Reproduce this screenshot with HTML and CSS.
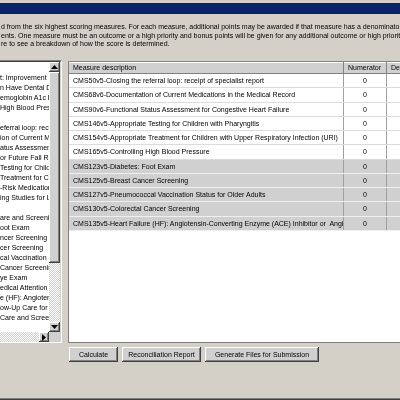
FILE: index.html
```html
<!DOCTYPE html>
<html lang="en">
<head>
    <meta charset="UTF-8">
    <meta name="viewport" content="width=device-width, initial-scale=1.0">
    <title>Quality Measures</title>
    <link rel="stylesheet" href="styles.css">
</head>
<body>
<div class="window">

    <div class="titlebar"></div>

    <p class="intro">d from the six highest scoring measures. For each measure, additional points may be awarded if that measure has a denominator<br>
    ents. One measure must be an outcome or a high priority and bonus points will be given for any additional outcome or high priority<br>
    re to see a breakdown of how the score is determined.</p>

    <div class="main">

        <!-- lista de medidas disponibles -->
        <div class="list-box">
            <div class="list-top">
                <ul class="measure-list">
                    <li></li>
                    <li>t: Improvement in Blood Pressure</li>
                    <li>n Have Dental Decay or Cavities</li>
                    <li>emoglobin A1c Poor Control</li>
                    <li>High Blood Pressure</li>
                    <li></li>
                    <li>eferral loop: receipt of specialist report</li>
                    <li>ion of Current Medications</li>
                    <li>atus Assessment for Congestive</li>
                    <li>or Future Fall Risk</li>
                    <li>Testing for Children with Pharyngitis</li>
                    <li>Treatment for Children with URI</li>
                    <li>-Risk Medications in the Elderly</li>
                    <li>ing Studies for Low Back Pain</li>
                    <li></li>
                    <li>are and Screening for Tobacco</li>
                    <li>oot Exam</li>
                    <li>ncer Screening</li>
                    <li>cer Screening</li>
                    <li>cal Vaccination Status</li>
                    <li>Cancer Screening</li>
                    <li>ye Exam</li>
                    <li>edical Attention for Nephropathy</li>
                    <li>e (HF): Angiotensin-Converting</li>
                    <li>ow-Up Care for Children</li>
                    <li>Care and Screening</li>
                </ul>
                <div class="vscroll">
                    <div class="sbtn"><svg width="7" height="4" viewBox="0 0 7 4"><polygon points="3.5,0 7,4 0,4" fill="#000"/></svg></div>
                    <div class="thumb"></div>
                    <div class="track"></div>
                    <div class="sbtn"><svg width="7" height="4" viewBox="0 0 7 4"><polygon points="0,0 7,0 3.5,4" fill="#000"/></svg></div>
                </div>
            </div>
            <div class="hscroll">
                <div class="track"></div>
                <div class="sbtn"><svg width="4" height="7" viewBox="0 0 4 7"><polygon points="0,0 4,3.5 0,7" fill="#000"/></svg></div>
                <div class="corner"></div>
            </div>
        </div>

        <!-- medidas seleccionadas -->
        <div class="right-pane">
            <div class="grid">
                <div class="row head">
                    <div class="cell">Measure description</div>
                    <div class="cell">Numerator</div>
                    <div class="cell">Denominator</div>
                </div>
                <div class="row">
                    <div class="cell">CMS50v5-Closing the referral loop: receipt of specialist report</div>
                    <div class="cell num">0</div>
                    <div class="cell"></div>
                </div>
                <div class="row">
                    <div class="cell">CMS68v6-Documentation of Current Medications in the Medical Record</div>
                    <div class="cell num">0</div>
                    <div class="cell"></div>
                </div>
                <div class="row">
                    <div class="cell">CMS90v6-Functional Status Assessment for Congestive Heart Failure</div>
                    <div class="cell num">0</div>
                    <div class="cell"></div>
                </div>
                <div class="row">
                    <div class="cell">CMS146v5-Appropriate Testing for Children with Pharyngitis</div>
                    <div class="cell num">0</div>
                    <div class="cell"></div>
                </div>
                <div class="row">
                    <div class="cell">CMS154v5-Appropriate Treatment for Children with Upper Respiratory Infection (URI)</div>
                    <div class="cell num">0</div>
                    <div class="cell"></div>
                </div>
                <div class="row">
                    <div class="cell">CMS165v5-Controlling High Blood Pressure</div>
                    <div class="cell num">0</div>
                    <div class="cell"></div>
                </div>
                <div class="row grey">
                    <div class="cell">CMS123v5-Diabetes: Foot Exam</div>
                    <div class="cell num">0</div>
                    <div class="cell"></div>
                </div>
                <div class="row grey">
                    <div class="cell">CMS125v5-Breast Cancer Screening</div>
                    <div class="cell num">0</div>
                    <div class="cell"></div>
                </div>
                <div class="row grey">
                    <div class="cell">CMS127v5-Pneumococcal Vaccination Status for Older Adults</div>
                    <div class="cell num">0</div>
                    <div class="cell"></div>
                </div>
                <div class="row grey">
                    <div class="cell">CMS130v5-Colorectal Cancer Screening</div>
                    <div class="cell num">0</div>
                    <div class="cell"></div>
                </div>
                <div class="row grey">
                    <div class="cell">CMS135v5-Heart Failure (HF): Angiotensin-Converting Enzyme (ACE) Inhibitor or  Angi...</div>
                    <div class="cell num">0</div>
                    <div class="cell"></div>
                </div>
            </div>

            <div class="buttons">
                <button class="btn btn-calc">Calculate</button>
                <button class="btn btn-report">Reconciliation Report</button>
                <button class="btn btn-files">Generate Files for Submission</button>
            </div>
        </div>

    </div>
</div>
</body>
</html>
```

FILE: styles.css
```css
/* Reset */
body, p, ul, li {
    margin: 0;
    padding: 0;
}

body {
    width: 400px;
    height: 400px;
    overflow: hidden;
    background-color: #d4d0c8;
    font-family: "Liberation Sans", Arial, sans-serif;
    font-size: 7px;
    color: #000;
}

.window {
    height: 398px;
    border-bottom: 1px solid #808080;
    box-shadow: 0 1px 0 #404040;
    overflow: hidden;
}

.titlebar {
    margin-top: 3px;
    height: 11px;
    background-color: #0a246a;
}

/* texto en gris, sin colores de subpixel */
.intro,
.main {
    filter: grayscale(1);
}

.intro {
    margin: 9px 0 0 1px;
    line-height: 8.5px;
    white-space: nowrap;
}

.main {
    display: flex;
    align-items: flex-start;
    gap: 6px;
    margin-top: 11.5px;
}

/* Lista izquierda */
.list-box {
    box-sizing: border-box;
    width: 62px;
    height: 283px;
    flex-shrink: 0;
    background-color: #fff;
    border-top: 1px solid #808080;
    border-right: 1px solid #fff;
    border-bottom: 1px solid #fff;
    display: flex;
    flex-direction: column;
}

.list-top {
    display: flex;
    flex: 1;
    border-top: 1px solid #404040;
    border-right: 1px solid #d4d0c8;
    min-height: 0;
}

.measure-list {
    list-style: none;
    flex: 1;
    overflow: hidden;
    padding-top: 1px;
}

.measure-list li {
    height: 10px;
    line-height: 10px;
    white-space: nowrap;
}

.vscroll {
    width: 11px;
    display: flex;
    flex-direction: column;
}

.sbtn {
    box-sizing: border-box;
    width: 11px;
    height: 10px;
    background-color: #d4d0c8;
    box-shadow: inset -1px -1px #404040, inset 1px 1px #fff, inset -2px -2px #808080;
    display: flex;
    align-items: center;
    justify-content: center;
    flex-shrink: 0;
}

.thumb {
    height: 191px;
    background-color: #d4d0c8;
    box-shadow: inset -1px -1px #404040, inset 1px 1px #fff, inset -2px -2px #808080;
}

.track {
    flex: 1;
    background: repeating-conic-gradient(#d4d0c8 0 25%, #fff 0 50%) 0 0 / 2px 2px;
}

.hscroll {
    display: flex;
    height: 10px;
    border-right: 1px solid #d4d0c8;
}

.hscroll .sbtn {
    width: 10px;
}

.corner {
    width: 11px;
    background-color: #d4d0c8;
}

/* Tabla de medidas */
.right-pane {
    display: flex;
    flex-direction: column;
}

.grid {
    box-sizing: border-box;
    margin-top: 1px;
    width: 420px;
    height: 282px;
    background-color: #fff;
    border: 1px solid #808080;
    border-right: none;
}

.row {
    box-sizing: border-box;
    display: grid;
    grid-template-columns: 275px 43px 100px;
    height: 14.27px;
    border-bottom: 1px solid #dcdcdc;
}

.row.grey {
    background-color: #d4d0c8;
    border-bottom-color: #efefef;
}

.row.head {
    height: 12px;
    background-color: #d4d0c8;
    border-bottom: 1px solid #808080;
    box-shadow: inset 0 1px #fff;
}

.cell {
    overflow: hidden;
    white-space: pre;
    padding-left: 4px;
    line-height: 13.27px;
    border-right: 1px solid #a0a0a0;
}

.head .cell {
    line-height: 11px;
    border-right-color: #808080;
}

.cell.num {
    padding-left: 0;
    text-align: center;
}

.buttons {
    display: flex;
    gap: 4px;
    margin: 4px 0 0 1px;
}

.btn {
    box-sizing: border-box;
    height: 15px;
    padding: 0;
    border: none;
    background-color: #d4d0c8;
    box-shadow: inset -1px -1px #404040, inset 1px 1px #fff, inset -2px -2px #808080;
    font-family: "Liberation Sans", Arial, sans-serif;
    font-size: 7px;
    color: #000;
}

.btn-calc {
    width: 49px;
}

.btn-report {
    width: 79px;
}

.btn-files {
    width: 114px;
}
```
